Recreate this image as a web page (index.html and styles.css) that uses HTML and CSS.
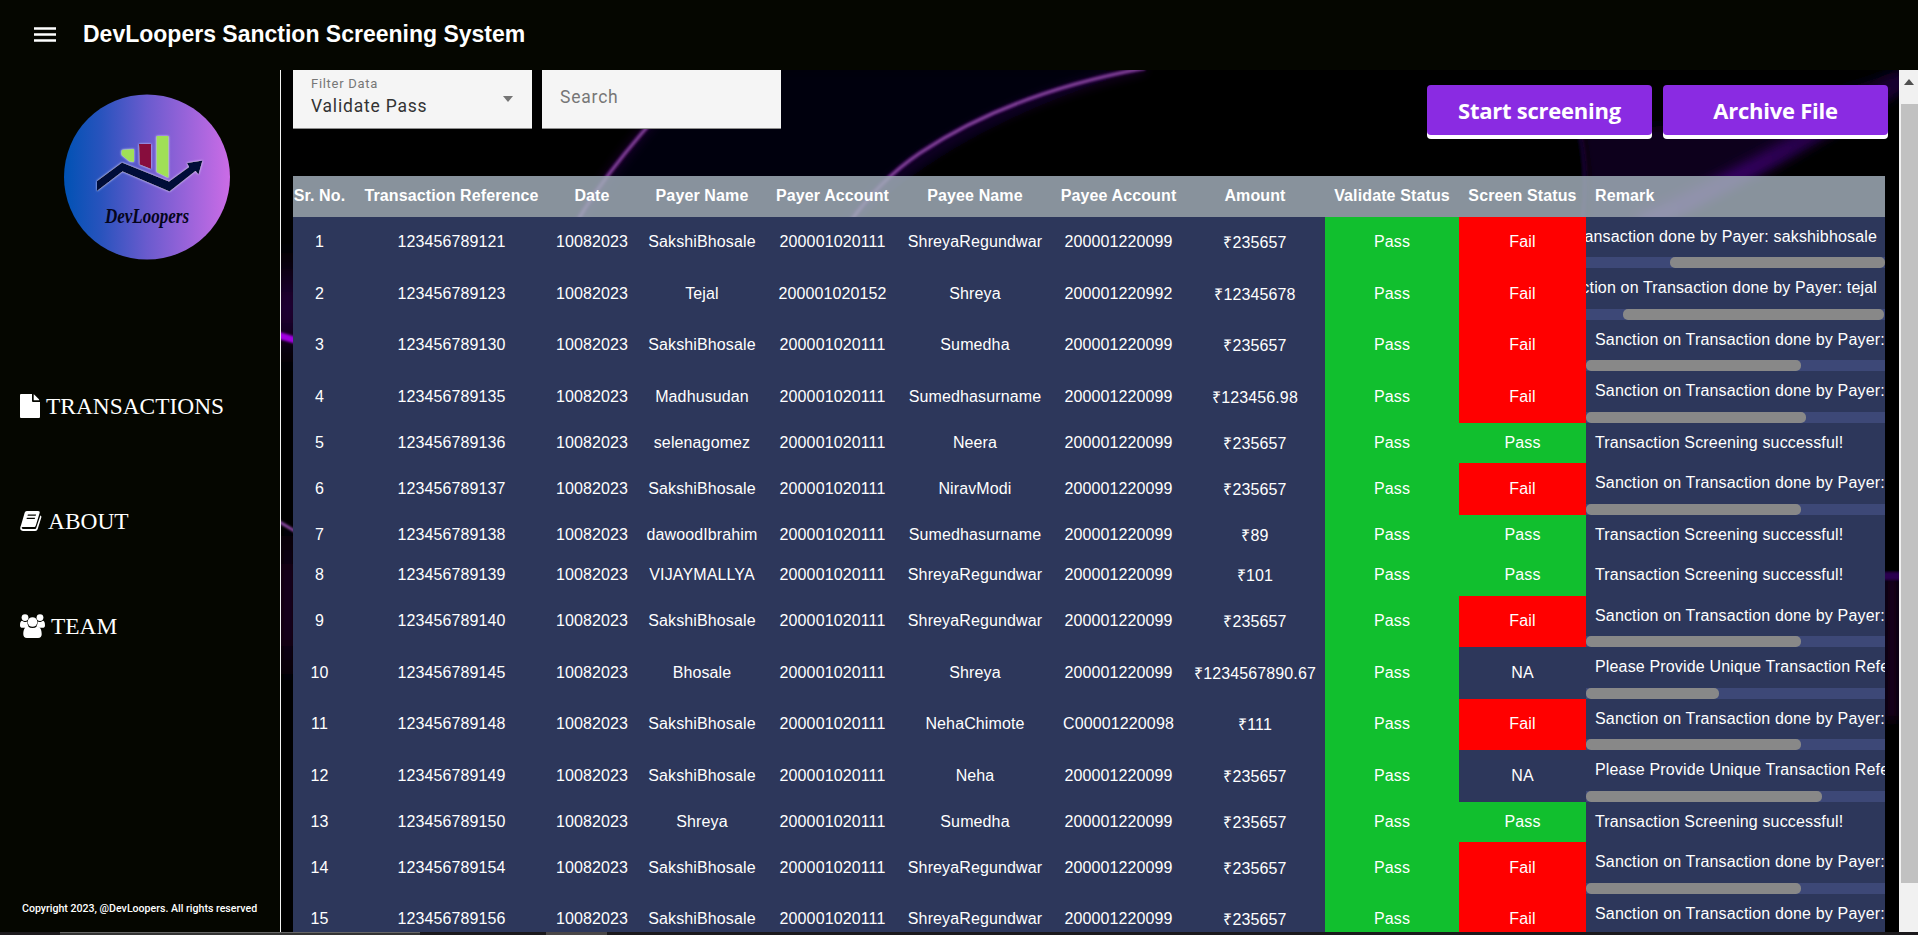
FILE: index.html
```html
<!DOCTYPE html>
<html lang="en">
<head>
<meta charset="utf-8">
<title>DevLoopers Sanction Screening System</title>
<link rel="stylesheet" href="styles.css">
</head>
<body>
<header class="topbar">
  <svg class="menu" width="22" height="15" viewBox="0 0 22 15"><path d="M0 1.500h22M0 7.500h22M0 13.500h22" stroke="#fff" stroke-width="2.400"/></svg>
  <h1 class="title">DevLoopers Sanction Screening System</h1>
</header>
<div class="layout">
  <aside class="sidebar">
    <svg class="logo" width="166" height="166" viewBox="0 0 166 166">
      <defs>
        <linearGradient id="disc" x1="0" x2="1" y1="0" y2="0"><stop offset="0" stop-color="#0052b4"/><stop offset=".22" stop-color="#2853bd"/><stop offset=".5" stop-color="#6a5bce"/><stop offset="1" stop-color="#cb6ce6"/></linearGradient>
        <filter id="halo" x="-20%" y="-20%" width="140%" height="140%"><feDropShadow dx="0" dy="0" stdDeviation="1.300" flood-color="#e4e0ff"/></filter>
      </defs>
      <ellipse cx="83" cy="83" rx="83" ry="82.600" fill="url(#disc)"/>
      <g filter="url(#halo)">
        <path d="M57.500 57q0-1 1-1.300l11.500-.7v13l-4.500-.5-8-6.500z" fill="#a0e057"/>
        <path d="M75 50h12v25l-11.500-4.500z" fill="#870a3c"/>
        <path d="M92.500 42h12v42l-12-6z" fill="#a0e057"/>
        <path d="M33 87l25-18.500 47 19 20-14.500-2-4 15.500-2.500-4 14-3-3.500-26 20.500-47-20-25.500 19.500z" fill="#050e38"/>
      </g>
      <text class="logo-text" x="41" y="128.500" textLength="84" lengthAdjust="spacingAndGlyphs">DevLoopers</text>
    </svg>
    <nav class="nav">
      <a class="nav-item"><svg width="20" height="24" viewBox="0 0 20 24"><path fill="#fff" d="M1.300 0H12v6.700c0 .8.5 1.300 1.300 1.300H20v14.700c0 .8-.5 1.300-1.300 1.300H1.300C.5 24 0 23.500 0 22.700V1.300C0 .5.5 0 1.300 0zM13.700 0.300c.3.2.500.3.700.500l4.300 4.300c.3.3.500.700.6 1.200h-5.600z"/></svg><span>TRANSACTIONS</span></a>
      <a class="nav-item"><svg width="22" height="20" viewBox="0 0 22 20"><path fill="#fff" fill-rule="evenodd" d="M7 0h11c1.500 0 2 .8 1.600 2l-3.700 12.200c-.4 1.300-1 1.800-2.400 1.800H3c-1 0-1.500.4-1.300 1.100.2.600.8.900 1.600.900h11.500c.8 0 1.200-.3 1.400-1L20.400 4.600c.8.4 1.200 1 .9 1.900L17.700 18c-.4 1.300-1.300 2-2.500 2H3.300C1.300 20 0 18.600.2 17c.1-1 .5-1.900.9-3L4.300 3C4.700 1.200 5.400 0 7 0zM7.900 3.400l-.4 1.400h8.200l.4-1.400zM6.900 6.700l-.4 1.400h8.200l.4-1.400z"/></svg><span>ABOUT</span></a>
      <a class="nav-item"><svg width="25" height="24" viewBox="0 0 25 24"><g fill="#fff"><circle cx="5" cy="3.600" r="3.400"/><circle cx="20" cy="3.600" r="3.400"/><circle cx="12.500" cy="8" r="4.800"/><path d="M2 6.700c2 1.500 4 1.400 5.400.9-.1 2 .3 3.500 1.400 4.800-1.600 0-2.600.400-3.500 1.300H2.600C.9 13.700 0 12.900 0 11.400 0 9 .6 6.600 2 6.700zM23 6.700c-2 1.500-4 1.400-5.400.9.1 2-.3 3.500-1.400 4.800 1.600 0 2.600.400 3.500 1.300h2.700c1.700 0 2.600-.8 2.600-2.300 0-2.400-.6-4.800-2-4.700zM7.900 12.600c3 2 6.200 2 9.200 0 3.300.1 4.600 3.600 4.600 7.600 0 2.300-1.300 3.800-3.600 3.800H6.900c-2.300 0-3.600-1.500-3.600-3.800 0-4 1.300-7.500 4.600-7.600z"/></g></svg><span>TEAM</span></a>
    </nav>
    <p class="copyright">Copyright 2023, @DevLoopers. All rights reserved</p>
  </aside>
  <main class="content">
    <svg class="backdrop" width="1618" height="862" viewBox="281 70 1618 862">
      <defs>
        <filter id="soft" x="-20%" y="-20%" width="140%" height="140%"><feGaussianBlur stdDeviation="6"/></filter>
        <filter id="wide" filterUnits="userSpaceOnUse" x="200" y="150" width="200" height="700"><feGaussianBlur stdDeviation="8 22"/></filter>
        <filter id="fine" filterUnits="userSpaceOnUse" x="200" y="0" width="1718" height="935"><feGaussianBlur stdDeviation=".8"/></filter>
        <linearGradient id="band" gradientUnits="userSpaceOnUse" x1="1640" y1="225" x2="1900" y2="80"><stop offset="0" stop-color="#4a0a80"/><stop offset=".4" stop-color="#340060"/><stop offset="1" stop-color="#180030"/></linearGradient>
      </defs>
      <rect x="281" y="70" width="1618" height="862" fill="#000"/>
      <path d="M650 128L560 240H840Q940 130 1140 70H700Z" fill="#05000a" filter="url(#soft)"/>
      <g fill="none">
        <g stroke="#55108a" stroke-width="5" opacity=".45" filter="url(#soft)"><path d="M700 70Q610 160 570 240"/><path d="M850 225Q930 120 1145 68"/></g>
        <g stroke="#4a0f68" stroke-width="6" opacity=".6" filter="url(#fine)"><path d="M700 70Q612 160 575 225"/><path d="M850 222Q880 180 920 153Q1010 93 1145 68"/></g>
        <g stroke="#8a4aa0" stroke-width="2.400" filter="url(#fine)"><path d="M700 70Q612 160 575 225"/><path d="M850 222Q880 180 920 153Q1010 93 1145 68"/></g>
        <path d="M1574 110Q1592 165 1581 230" stroke="#280640" stroke-width="5" filter="url(#fine)" opacity=".8"/>
      </g>
      <path d="M1580 130Q1740 130 1900 70V90Q1840 125 1780 158T1620 240H1586Q1592 180 1580 130Z" fill="#10001c" filter="url(#soft)"/>
      <path d="M1640 225Q1770 165 1910 75" fill="none" stroke="url(#band)" stroke-width="18" filter="url(#soft)"/>
      <path d="M275 280H300V335H275Z" fill="#2a0044" filter="url(#wide)"/>
      <path d="M278 335L298 341" stroke="#a000e0" stroke-width="7" filter="url(#fine)"/>
      <path d="M276 550H300V660H276Z" fill="#12001e" filter="url(#wide)"/>
      <path d="M278 521L298 533" stroke="#8d4aa6" stroke-width="3" filter="url(#fine)"/>
      <path d="M1884 575H1900V720H1884Z" fill="#12001e" filter="url(#soft)"/>
      <path d="M1882 576H1902" stroke="#2a0050" stroke-width="8" filter="url(#fine)"/>
    </svg>
    <div class="page">
      <div class="toolbar">
        <div class="field"><div class="field-text"><span class="field-label">Filter Data</span><span class="field-value">Validate Pass</span></div><span class="caret"></span></div>
        <div class="field"><span class="field-placeholder">Search</span></div>
        <div class="actions"><button class="btn">Start screening</button><button class="btn">Archive File</button></div>
      </div>
      <div class="table" id="table">
        <div class="row head"><span class="first">Sr. No.</span><span>Transaction Reference</span><span>Date</span><span>Payer Name</span><span>Payer Account</span><span>Payee Name</span><span>Payee Account</span><span>Amount</span><span>Validate Status</span><span>Screen Status</span><span class="remark-head">Remark</span></div>
      </div>
    </div>
  </main>
  <div class="scrollbar"><span class="arrow"></span><span class="thumb"></span></div>
</div>
<footer class="taskbar"><span class="task"></span><span class="task-small"></span></footer>
<script src="table.js"></script>
</body>
</html>
```
FILE: styles.css
```css
* { box-sizing: border-box; }
body { margin: 0; width: 1918px; height: 935px; overflow: hidden; background: #050600; color: #fff; font-family: "Liberation Sans", Arial, sans-serif; display: flex; flex-direction: column; }
.topbar { height: 70px; flex: none; display: flex; align-items: center; padding: 0 34px; background: #050600; }
.menu { margin-right: 27px; margin-top: -1px; }
.title { margin: 0; padding-bottom: 3px; font-size: 23px; line-height: 28px; font-weight: 700; white-space: nowrap; }
.layout { height: 862px; flex: none; display: flex; }
.sidebar { width: 281px; flex: none; border-right: 1px solid #f2f2f2; background: #050600; display: flex; flex-direction: column; padding: 24px 20px 0; }
.logo { margin-left: 44px; flex: none; }
.logo-text { font: italic 700 22px "Liberation Serif", serif; fill: #05051c; }
.nav { margin-top: 132px; font-family: "Liberation Serif", "Times New Roman", serif; font-size: 23.400px; line-height: 28px; }
.nav-item { display: flex; align-items: center; gap: 6px; height: 28px; }
.nav-item span { padding-bottom: 1px; }
.nav-item + .nav-item { margin-top: 87px; }
.nav-item + .nav-item + .nav-item { margin-top: 77px; }
.copyright { margin: auto 0 17px 2px; font: 500 10.600px/12px Roboto, sans-serif; white-space: nowrap; }
.content { width: 1618px; flex: none; position: relative; overflow: hidden; background: #000; }
.backdrop { position: absolute; inset: 0; }
.page { position: relative; padding-left: 12px; }
.toolbar { height: 106px; display: flex; align-items: flex-start; gap: 10px; }
.field { width: 239px; height: 59px; background: #f5f5f5; border-bottom: 1px solid #8e8e8e; display: flex; align-items: center; justify-content: space-between; padding: 0 18px; font-family: Roboto, sans-serif; }
.field-text { display: flex; flex-direction: column; }
.field-label { font-size: 13px; line-height: 20px; color: #777; margin-top: -6px; letter-spacing: .7px; }
.field-value { font-size: 17.500px; line-height: 25px; color: #333; letter-spacing: .8px; }
.field-placeholder { font-size: 17.500px; color: #777; margin-top: -4px; letter-spacing: .8px; }
.caret { border: 5.500px solid transparent; border-top: 6px solid #757575; border-bottom: 0; margin-right: 1px; margin-top: -1px; }
.actions { margin: 15px 11px 0 auto; display: flex; gap: 11px; }
.btn { width: 225px; height: 50px; border: 0; border-radius: 4px; background: #8a2be2; box-shadow: 0 4px 0 #fff; color: #fff; font: 700 22px "Open Sans", sans-serif; letter-spacing: -.25px; white-space: nowrap; padding: 0; }
.table { width: 1592px; font-size: 16px; letter-spacing: .12px; }
.row { display: grid; grid-template-columns: 63px 191px 90px 130px 131px 154px 133px 140px 134px 127px 299px; background: #2d375b; }
.row > span { display: flex; align-items: center; justify-content: center; white-space: nowrap; padding-bottom: 1px; }
.row > .first { padding-right: 10px; }
.head { height: 41px; background: rgba(160, 172, 183, .85); font-weight: 700; }
.row > .remark-head { justify-content: flex-start; padding-left: 9px; }
.row > .pass { background: #11bf2e; }
.row > .fail { background: #f00; }
.remark { position: relative; overflow: hidden; display: flex; flex-direction: column; letter-spacing: .16px; }
.remark-text { flex: 1; display: flex; align-items: center; padding: 0 8px 1px 9px; white-space: nowrap; }
.remark-end { justify-content: flex-end; }
.track { height: 11px; flex: none; background: #3d4877; display: flex; }
.bar { height: 11px; border-radius: 5px; background: #888; }
.scrollbar { width: 19px; flex: none; background: #f1f1f1; display: flex; flex-direction: column; align-items: flex-end; }
.arrow { margin: 9px 4px 19px 0; border: 5px solid transparent; border-top: 0; border-bottom: 6px solid #505050; }
.thumb { width: 17px; height: 779px; background: #c1c1c1; }
.taskbar { height: 3px; flex: none; background: #1c1a1d; display: flex; }
.task { width: 360px; margin-left: 60px; background: #343434; border-top: 1px solid #666; }
.task-small { width: 61px; margin-left: 126px; background: #4a4747; }
```
FILE: table.js
```js
const SANCTION = 'Sanction on Transaction done by Payer: ';
const OK = 'Transaction Screening successful!';
const DUPLICATE = 'Please Provide Unique Transaction Reference';
// reference, payer, payer account, payee, payee account, amount, screen status, remark, row height, bar start, bar width
const rows = [
  ['123456789121', 'SakshiBhosale', '200001020111', 'ShreyaRegundwar', '200001220099', '₹235657', 'Fail', SANCTION + 'sakshibhosale', 51, 84, 215],
  ['123456789123', 'Tejal', '200001020152', 'Shreya', '200001220992', '₹12345678', 'Fail', SANCTION + 'tejal', 52, 37, 261],
  ['123456789130', 'SakshiBhosale', '200001020111', 'Sumedha', '200001220099', '₹235657', 'Fail', SANCTION, 51, 0, 215],
  ['123456789135', 'Madhusudan', '200001020111', 'Sumedhasurname', '200001220099', '₹123456.98', 'Fail', SANCTION, 52, 0, 220],
  ['123456789136', 'selenagomez', '200001020111', 'Neera', '200001220099', '₹235657', 'Pass', OK, 40],
  ['123456789137', 'SakshiBhosale', '200001020111', 'NiravModi', '200001220099', '₹235657', 'Fail', SANCTION, 52, 0, 215],
  ['123456789138', 'dawoodIbrahim', '200001020111', 'Sumedhasurname', '200001220099', '₹89', 'Pass', OK, 40],
  ['123456789139', 'VIJAYMALLYA', '200001020111', 'ShreyaRegundwar', '200001220099', '₹101', 'Pass', OK, 41],
  ['123456789140', 'SakshiBhosale', '200001020111', 'ShreyaRegundwar', '200001220099', '₹235657', 'Fail', SANCTION, 51, 0, 215],
  ['123456789145', 'Bhosale', '200001020111', 'Shreya', '200001220099', '₹1234567890.67', 'NA', DUPLICATE, 52, 0, 133],
  ['123456789148', 'SakshiBhosale', '200001020111', 'NehaChimote', 'C00001220098', '₹111', 'Fail', SANCTION, 51, 0, 215],
  ['123456789149', 'SakshiBhosale', '200001020111', 'Neha', '200001220099', '₹235657', 'NA', DUPLICATE, 52, 0, 236],
  ['123456789150', 'Shreya', '200001020111', 'Sumedha', '200001220099', '₹235657', 'Pass', OK, 40],
  ['123456789154', 'SakshiBhosale', '200001020111', 'ShreyaRegundwar', '200001220099', '₹235657', 'Fail', SANCTION, 52, 0, 215],
  ['123456789156', 'SakshiBhosale', '200001020111', 'ShreyaRegundwar', '200001220099', '₹235657', 'Fail', SANCTION, 51, 0, 215]
];
const table = document.getElementById('table');
rows.forEach((r, i) => {
  const [ref, payer, pacc, payee, racc, amount, screen, remark, height, start, width] = r;
  const el = document.createElement('div');
  el.className = 'row';
  el.style.height = height + 'px';
  const bar = width ? `<div class="track"><div class="bar" style="margin-left:${start}px;width:${width}px"></div></div>` : '';
  el.innerHTML = `<span class="first">${i + 1}</span>` +
    [ref, '10082023', payer, pacc, payee, racc, amount].map(t => `<span>${t}</span>`).join('') +
    `<span class="pass">Pass</span><span class="${screen.toLowerCase()}">${screen}</span>` +
    `<div class="remark"><div class="remark-text${start ? ' remark-end' : ''}">${remark}</div>${bar}</div>`;
  table.append(el);
});
```
